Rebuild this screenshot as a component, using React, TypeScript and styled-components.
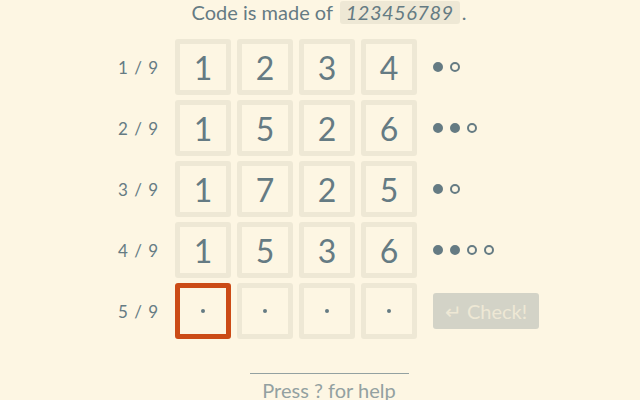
import styled, { createGlobalStyle } from "styled-components";

const GlobalStyle = createGlobalStyle`
  html, body {
    margin: 0;
    padding: 0;
    background: #fdf6e3;
    font-family: Lato, "Noto Sans", sans-serif;
    color: #657b83;
  }
`;

type Guess = {
    digits: string[]
    hits: number
    near: number
}

const guesses: Guess[] = [
    { digits: ["1", "2", "3", "4"], hits: 1, near: 1 },
    { digits: ["1", "5", "2", "6"], hits: 2, near: 1 },
    { digits: ["1", "7", "2", "5"], hits: 1, near: 1 },
    { digits: ["1", "5", "3", "6"], hits: 2, near: 2 },
];

const App = () => {
    return (
        <>
            <GlobalStyle />
            <Page>
                <Title>
                    Code is made of <Code>123456789</Code>.
                </Title>
                <Board>
                    {guesses.map((g, idx) => (
                        <Row key={idx}>
                            <Label>{idx + 1} / 9</Label>
                            <Cells>
                                {g.digits.map((d, i) => (
                                    <Cell key={i}>{d}</Cell>
                                ))}
                            </Cells>
                            <Feedback>
                                {Array.from({ length: g.hits }).map((_, i) => (
                                    <Dot key={"h" + i} $filled />
                                ))}
                                {Array.from({ length: g.near }).map((_, i) => (
                                    <Dot key={"n" + i} />
                                ))}
                            </Feedback>
                        </Row>
                    ))}
                    <Row>
                        <Label>5 / 9</Label>
                        <Cells>
                            {[0, 1, 2, 3].map((i) => (
                                <Cell key={i} $active={i === 0}>
                                    <Empty />
                                </Cell>
                            ))}
                        </Cells>
                        <Feedback>
                            <CheckButton disabled>↵ Check!</CheckButton>
                        </Feedback>
                    </Row>
                </Board>
                <Footer>Press ? for help</Footer>
            </Page>
        </>
    );
}

export default App;

const Page = styled.div({
    width: "640px",
    height: "400px",
    boxSizing: "border-box",
    paddingLeft: "18px",
    overflow: "hidden",
    display: "flex",
    flexDirection: "column",
    alignItems: "center",
});

const Title = styled.div`
    font-size: 20px;
    line-height: 24px;
    height: 24px;
    white-space: nowrap;
`;

const Code = styled.span`
    display: inline-block;
    background: #eee8d5;
    border-radius: 3px;
    padding: 0 6px;
    font-style: italic;
    letter-spacing: 0.5px;
    line-height: 23px;
    margin: 0 2px 0 2px;
`;

const Board = styled.div({
    display: "flex",
    flexDirection: "column",
    gap: "5px",
    marginTop: "15px",
});

const Row = styled.div({
    display: "flex",
    alignItems: "center",
});

const Label = styled.div`
    width: 40px;
    margin-right: 17px;
    text-align: right;
    font-size: 17px;
    letter-spacing: 1px;
    white-space: nowrap;
`;

const Cells = styled.div({
    display: "flex",
    gap: "6px",
});

const Cell = styled.div<{ $active?: boolean }>`
    width: 56px;
    height: 56px;
    box-sizing: border-box;
    border: 5px solid ${(p) => (p.$active ? "#cb4b16" : "#eee8d5")};
    border-radius: 3px;
    display: flex;
    align-items: center;
    justify-content: center;
    font-size: 32px;
    color: #657b83;
`;

const Empty = styled.span`
    width: 4px;
    height: 4px;
    border-radius: 50%;
    background: #657b83;
`;

const Feedback = styled.div({
    width: "107px",
    marginLeft: "16px",
    display: "flex",
    alignItems: "center",
    gap: "7px",
});

const Dot = styled.span<{ $filled?: boolean }>`
    width: 10px;
    height: 10px;
    box-sizing: border-box;
    border-radius: 50%;
    border: 2px solid #657b83;
    background: ${(p) => (p.$filled ? "#657b83" : "transparent")};
`;

const CheckButton = styled.button`
    width: 106px;
    height: 36px;
    border: none;
    border-radius: 3px;
    background: #d3d3c7;
    color: #eee8d5;
    font-family: Lato, "Noto Sans", sans-serif;
    font-size: 20px;
    padding: 0;
`;

const Footer = styled.div`
    margin-top: 34px;
    width: 159px;
    border-top: 1px solid #93a1a1;
    text-align: center;
    font-size: 20px;
    line-height: 32px;
    color: #93a1a1;
    white-space: nowrap;
`;
